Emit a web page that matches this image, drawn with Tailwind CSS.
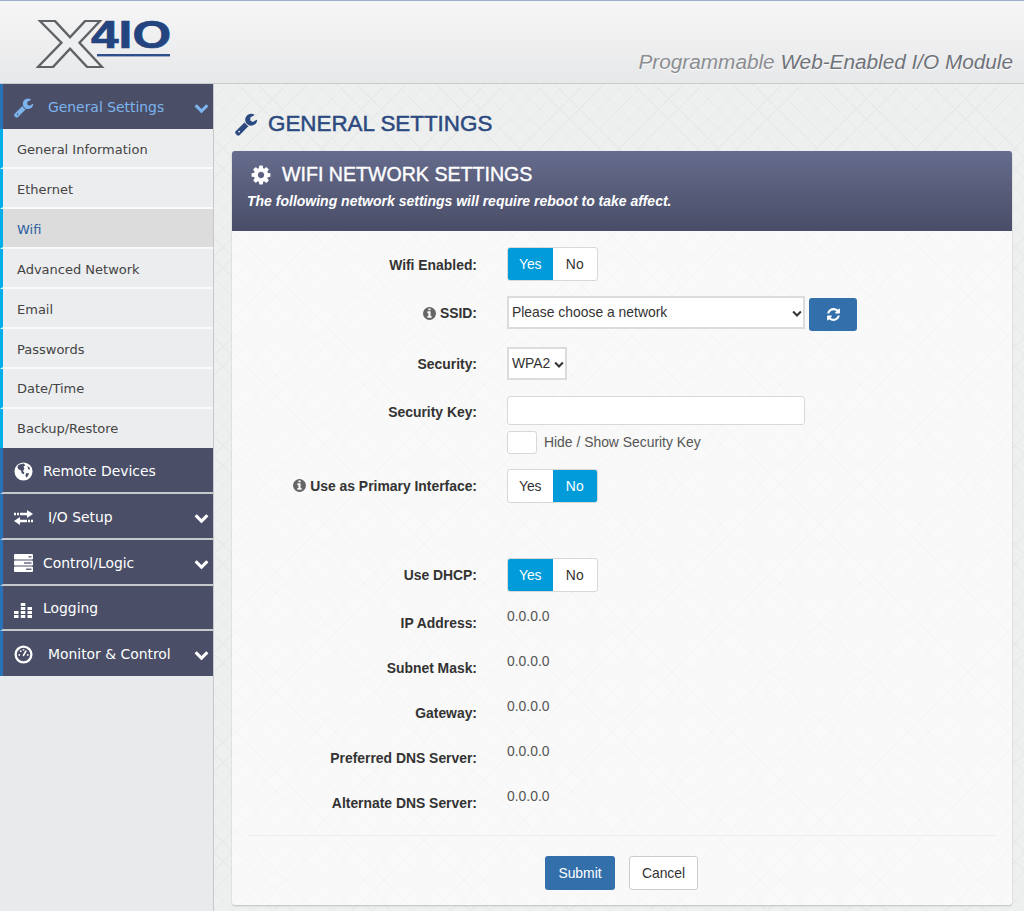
<!DOCTYPE html>
<html lang="en">
<head>
<meta charset="utf-8">
<title>X410 - General Settings</title>
<script src="https://cdn.jsdelivr.net/npm/@tailwindcss/browser@4"></script>
</head>
<body class="h-[911px] w-[1024px] overflow-hidden bg-[#eef0ef] font-['Liberation_Sans',sans-serif] text-[#333]">

<!-- shared icons (font-awesome style, 1792 grid) -->
<svg class="hidden">
  <symbol id="i-wrench" viewBox="0 0 1792 1792"><path fill="currentColor" d="M448 1472q0-26-19-45t-45-19-45 19-19 45 19 45 45 19 45-19 19-45zm644-420l-682 682q-37 37-90 37-52 0-91-37l-106-108q-38-36-38-90 0-53 38-91l681-681q39 98 114.5 173.5t173.5 114.5zm634-435q0 39-23 106-47 134-164.5 217.5t-258.5 83.5q-185 0-316.5-131.5t-131.5-316.5 131.5-316.5 316.5-131.5q58 0 121.5 16.5t107.5 46.5q16 11 16 28t-16 28l-293 169v224l193 107q5-3 79-48.5t135.5-81 70.5-35.5q15 0 23.5 10t8.5 25z"/></symbol>
  <symbol id="i-cog" viewBox="0 0 1792 1792"><path fill="currentColor" d="M1152 896q0-106-75-181t-181-75-181 75-75 181 75 181 181 75 181-75 75-181zm512-109v222q0 12-8 23t-20 13l-185 28q-19 54-39 91 35 50 107 138 10 12 10 25t-9 23q-27 37-99 108t-94 71q-12 0-26-9l-138-108q-44 23-91 38-16 136-29 186-7 28-36 28h-222q-14 0-24.5-8.5t-11.5-21.5l-28-184q-49-16-90-37l-141 107q-10 9-25 9-14 0-25-11-126-114-165-168-7-10-7-23 0-12 8-23 15-21 51-66.5t54-70.5q-27-50-41-99l-183-27q-13-2-21-12.5t-8-23.5v-222q0-12 8-23t19-13l186-28q14-46 39-92-40-57-107-138-10-12-10-24 0-10 9-23 26-36 98.5-107.5t94.5-71.5q13 0 26 10l138 107q44-23 91-38 16-136 29-186 7-28 36-28h222q14 0 24.5 8.5t11.5 21.5l28 184q49 16 90 37l142-107q9-9 24-9 13 0 25 10 129 119 165 170 7 8 7 22 0 12-8 23-15 21-51 66.5t-54 70.5q26 50 41 98l183 28q13 2 21 12.5t8 23.5z"/></symbol>
  <symbol id="i-chevron" viewBox="0 0 1792 1792"><path fill="currentColor" d="M1683 808l-742 741q-19 19-45 19t-45-19l-742-741q-19-19-19-45.5t19-45.5l166-165q19-19 45-19t45 19l531 531 531-531q19-19 45-19t45 19l166 165q19 19 19 45.5t-19 45.5z"/></symbol>
  <symbol id="i-info" viewBox="0 0 1792 1792"><path fill="currentColor" d="M1152 1376v-160q0-14-9-23t-23-9h-96v-512q0-14-9-23t-23-9h-320q-14 0-23 9t-9 23v160q0 14 9 23t23 9h96v320h-96q-14 0-23 9t-9 23v160q0 14 9 23t23 9h448q14 0 23-9t9-23zm-128-896v-160q0-14-9-23t-23-9h-192q-14 0-23 9t-9 23v160q0 14 9 23t23 9h192q14 0 23-9t9-23zm640 416q0 209-103 385.5t-279.5 279.5-385.5 103-385.5-103-279.5-279.5-103-385.5 103-385.5 279.5-279.5 385.5-103 385.5 103 279.5 279.5 103 385.5z"/></symbol>
  <symbol id="i-refresh" viewBox="0 0 1792 1792"><path fill="currentColor" d="M1639 1056q0 5-1 7-64 268-268 434.5t-478 166.5q-146 0-282.5-55t-243.5-157l-129 129q-19 19-45 19t-45-19-19-45v-448q0-26 19-45t45-19h448q26 0 45 19t19 45-19 45l-137 137q71 66 161 102t187 36q134 0 250-65t186-179q11-17 53-117 8-23 30-23h192q13 0 22.5 9.5t9.5 22.5zm25-800v448q0 26-19 45t-45 19h-448q-26 0-45-19t-19-45 19-45l138-138q-148-137-349-137-134 0-250 65t-186 179q-11 17-53 117-8 23-30 23h-199q-13 0-22.5-9.5t-9.5-22.5v-7q65-268 270-434.5t480-166.5q146 0 284 55.5t245 156.5l130-129q19-19 45-19t45 19 19 45z"/></symbol>
</svg>

<header class="h-[84px] border-t border-b border-t-[#9fb0cc] border-b-[#c9cbcb] bg-gradient-to-b from-[#f6f6f7] to-[#e7e8e9] flex justify-between">
  <svg class="ml-[36px] mt-[4px] w-[140px] h-[78px]" viewBox="0 0 140 78">
    <text x="1" y="62" font-family="Liberation Sans" font-weight="700" font-size="66" textLength="66" lengthAdjust="spacingAndGlyphs" fill="#eeeff0" stroke="#606266" stroke-width="1.8">X</text>
    <text x="55" y="43" font-family="Liberation Sans" font-weight="700" font-size="38" textLength="80" lengthAdjust="spacingAndGlyphs" fill="#24447f" stroke="#24447f" stroke-width="0.7">4IO</text>
    <rect x="61" y="49" width="73" height="2.4" fill="#2d4f8c"/>
  </svg>
  <p class="self-end mr-[11px] mb-[7px] text-[20.75px] leading-[28px] italic text-[#8b8d91] [text-shadow:0_1px_1px_#fff]">Programmable <span class="text-[#6f7278]">Web-Enabled I/O Module</span></p>
</header>

<div class="flex h-[827px]">
  <!-- sidebar -->
  <nav class="w-[214px] shrink-0 bg-[#e9eaec] border-r border-[#c6c8c9] font-['DejaVu_Sans',sans-serif]">
    <a class="flex items-center h-[45px] pt-[1px] border-l-[3px] border-[#2a72b8] bg-[#4a4f67] text-[#7db4ee] text-[13.9px]">
      <svg class="w-[21px] h-[21px] ml-[10px]"><use href="#i-wrench"/></svg>
      <span class="ml-[14px]">General Settings</span>
      <svg class="w-[15px] h-[15px] ml-auto mr-[4px]"><use href="#i-chevron"/></svg>
    </a>
    <ul class="text-[13px] text-[#444]">
      <li class="flex items-center h-[40px] pt-[4px] border-l-[3px] border-[#00aeea] bg-[#ecedef] border-b-2 border-b-white/80 pl-[14px]">General Information</li>
      <li class="flex items-center h-[40px] pt-[4px] border-l-[3px] border-[#00aeea] bg-[#ecedef] border-b-2 border-b-white/80 pl-[14px]">Ethernet</li>
      <li class="flex items-center h-[40px] pt-[4px] border-l-[3px] border-[#00aeea] bg-[#dcdcdc] border-b-2 border-b-white/80 pl-[14px] text-[#2a5fa0]">Wifi</li>
      <li class="flex items-center h-[40px] pt-[4px] border-l-[3px] border-[#00aeea] bg-[#ecedef] border-b-2 border-b-white/80 pl-[14px]">Advanced Network</li>
      <li class="flex items-center h-[40px] pt-[4px] border-l-[3px] border-[#00aeea] bg-[#ecedef] border-b-2 border-b-white/80 pl-[14px]">Email</li>
      <li class="flex items-center h-[40px] pt-[4px] border-l-[3px] border-[#00aeea] bg-[#ecedef] border-b-2 border-b-white/80 pl-[14px]">Passwords</li>
      <li class="flex items-center h-[40px] pt-[2px] border-l-[3px] border-[#00aeea] bg-[#ecedef] border-b-2 border-b-white/80 pl-[14px]">Date/Time</li>
      <li class="flex items-center h-[39px] border-l-[3px] border-[#00aeea] bg-[#ecedef] pl-[14px]">Backup/Restore</li>
    </ul>
    <a class="flex items-center h-[46px] pt-[2px] border-l-[3px] border-[#2a72b8] bg-[#4a4f67] border-b-2 border-b-[#c6c8ce] text-white text-[13.9px]">
      <svg class="w-[19px] h-[19px] ml-[11px]" viewBox="0 0 20 20"><circle cx="10" cy="10" r="9.5" fill="#fff"/><path fill="#4a4f67" d="M6 2.500l4-1 2 2-2 1.500 1 2-1.500 2.500 1.500 2-1 1.500-2-1.500-.5-2.500-2.500-1-1.500-2.500 1-2zM13 11.500l3 .5-1.500 3-1.500 1.500-1-2.500zM14 4l2.500 2 .5 2-2-.5z"/></svg>
      <span class="ml-[10px]">Remote Devices</span>
    </a>
    <a class="flex items-center h-[46px] pt-[2px] border-l-[3px] border-[#2a72b8] bg-[#4a4f67] border-b-2 border-b-[#c6c8ce] text-white text-[13.9px]">
      <svg class="w-[19px] h-[15px] ml-[11px]" viewBox="0 0 19 15"><path fill="#fff" d="M0 2.800h2v2.400H0zM3 2.800h2v2.400H3zM6 2.800h7V0l6 4-6 4V5.200H6zM0 11l6-4v2.800h7v2.400H6V15zM14 9.800h2v2.400h-2zM17 9.800h2v2.400h-2z"/></svg>
      <span class="ml-[15px]">I/O Setup</span>
      <svg class="w-[15px] h-[15px] ml-auto mr-[4px] text-white"><use href="#i-chevron"/></svg>
    </a>
    <a class="flex items-center h-[46px] pt-[2px] border-l-[3px] border-[#2a72b8] bg-[#4a4f67] border-b-2 border-b-[#c6c8ce] text-white text-[13.9px]">
      <svg class="w-[19px] h-[18px] ml-[11px]" viewBox="0 0 19 18"><path fill="#fff" d="M1 0h17a1 1 0 0 1 1 1v3.500a1 1 0 0 1-1 1H1a1 1 0 0 1-1-1V1a1 1 0 0 1 1-1zM1 6.500h17a1 1 0 0 1 1 1v3a1 1 0 0 1-1 1H1a1 1 0 0 1-1-1v-3a1 1 0 0 1 1-1zM1 12.500h17a1 1 0 0 1 1 1V17a1 1 0 0 1-1 1H1a1 1 0 0 1-1-1v-3.500a1 1 0 0 1 1-1z"/><path fill="#6a6e84" d="M14.500 2h3v1.500h-3zM10 8.300h7.500v1.500H10zM12 14.500h5.500V16H12z"/></svg>
      <span class="ml-[10px]">Control/Logic</span>
      <svg class="w-[15px] h-[15px] ml-auto mr-[4px] text-white"><use href="#i-chevron"/></svg>
    </a>
    <a class="flex items-center h-[45px] pt-[2px] border-l-[3px] border-[#2a72b8] bg-[#4a4f67] border-b-2 border-b-[#c6c8ce] text-white text-[13.9px]">
      <svg class="w-[18px] h-[18px] ml-[11px]" viewBox="0 0 18 18"><path fill="#fff" d="M0 15h4.500v3H0zM0 11h4.500v3H0zM6.800 15h4.500v3H6.800zM6.800 11h4.500v3H6.800zM6.800 7h4.500v3H6.800zM6.800 3h4.500v3H6.800zM13.500 15H18v3h-4.500zM13.500 11H18v3h-4.500zM13.500 7H18v3h-4.500z"/></svg>
      <span class="ml-[11px]">Logging</span>
    </a>
    <a class="flex items-center h-[45px] pt-[2px] border-l-[3px] border-[#2a72b8] bg-[#4a4f67] text-white text-[13.9px]">
      <svg class="w-[19px] h-[19px] ml-[11px]" viewBox="0 0 20 20"><circle cx="10" cy="10" r="8.300" fill="none" stroke="#fff" stroke-width="2.400"/><path fill="none" stroke="#fff" stroke-width="1.800" stroke-linecap="round" d="M10 11l2.500-4.500M5.500 10.500h.1M7 6.500h.1M10 5h.1M14.500 10.500h.1"/></svg>
      <span class="ml-[15px]">Monitor &amp; Control</span>
      <svg class="w-[15px] h-[15px] ml-auto mr-[4px] text-white"><use href="#i-chevron"/></svg>
    </a>
  </nav>

  <!-- main -->
  <main class="flex-1 pl-[18px] pr-[12px] bg-[#eef0ef] bg-[repeating-linear-gradient(45deg,transparent_0,transparent_13px,#e8eae9_13px,#e8eae9_14px),repeating-linear-gradient(-45deg,transparent_0,transparent_13px,#e8eae9_13px,#e8eae9_14px)]">
    <h1 class="flex items-center h-[67px] pl-[2px] pt-[13px] text-[22.4px] font-normal text-[#2c4a80] [-webkit-text-stroke:0.5px_#2c4a80]">
      <svg class="w-[24px] h-[24px]"><use href="#i-wrench"/></svg>
      <span class="ml-[10px]">GENERAL SETTINGS</span>
    </h1>
    <section class="h-[754px] rounded-[3px] bg-[#f8f9f8] bg-[repeating-linear-gradient(45deg,transparent_0,transparent_13px,#f5f6f5_13px,#f5f6f5_14px),repeating-linear-gradient(-45deg,transparent_0,transparent_13px,#f5f6f5_13px,#f5f6f5_14px)] shadow-[0_1px_2px_rgba(0,0,0,0.2)]">
      <div class="h-[80px] rounded-t-[3px] bg-gradient-to-b from-[#666c8d] to-[#494d67] pl-[15px] pt-[9px] text-white">
        <h2 class="flex items-center h-[28px] pl-[3px] pt-[2px] text-[19.6px] font-normal [-webkit-text-stroke:0.4px_#fff]">
          <svg class="w-[22px] h-[22px]"><use href="#i-cog"/></svg>
          <span class="ml-[10px]">WIFI NETWORK SETTINGS</span>
        </h2>
        <p class="mt-[3px] text-[14px] font-bold italic">The following network settings will require reboot to take affect.</p>
      </div>

      <form class="pt-[16px] text-[13.9px]">
        <div class="flex items-center h-[34px]">
          <label class="w-[245px] mr-[30px] pt-[2px] text-right font-bold">Wifi Enabled:</label>
          <div class="flex h-full w-[91px] rounded-[3px] border border-[#d8d8d8] bg-white overflow-hidden">
            <span class="flex flex-1 items-center justify-center bg-[#009bd8] text-white">Yes</span>
            <span class="flex flex-1 items-center justify-center">No</span>
          </div>
        </div>

        <div class="flex items-start h-[36px] mt-[15px]">
          <label class="flex items-center justify-end h-[33px] w-[245px] mr-[30px] pt-[2px] font-bold">
            <svg class="w-[15px] h-[15px] mr-[3px] text-[#666]"><use href="#i-info"/></svg>SSID:
          </label>
          <div class="relative h-[33px] w-[298px]">
            <select class="h-full w-full appearance-none border-2 border-[#dcdcdc] bg-white pl-[3px]"><option>Please choose a network</option></select>
            <svg class="absolute right-[3px] top-[12px] w-[10px] h-[10px] text-[#333]"><use href="#i-chevron"/></svg>
          </div>
          <button type="button" class="flex items-center justify-center h-[33px] w-[48px] mt-[2px] ml-[4px] rounded-[3px] bg-[#336faa] text-white">
            <svg class="w-[15px] h-[15px]"><use href="#i-refresh"/></svg>
          </button>
        </div>

        <div class="flex items-center h-[33px] mt-[15px]">
          <label class="w-[245px] mr-[30px] pt-[2px] text-right font-bold">Security:</label>
          <div class="relative h-full w-[60px]">
            <select class="h-full w-full appearance-none border-2 border-[#dcdcdc] bg-white pl-[3px]"><option>WPA2</option></select>
            <svg class="absolute right-[3px] top-[12px] w-[10px] h-[10px] text-[#333]"><use href="#i-chevron"/></svg>
          </div>
        </div>

        <div class="flex items-center h-[29px] mt-[16px]">
          <label class="w-[245px] mr-[30px] pt-[3px] text-right font-bold">Security Key:</label>
          <input type="text" class="h-full w-[298px] rounded-[3px] border border-[#d8d8d8] bg-white">
        </div>

        <div class="flex items-center h-[23px] mt-[6px] pl-[275px]">
          <span class="h-full w-[30px] rounded-[3px] border border-[#d8d8d8] bg-white"></span>
          <span class="ml-[7px] text-[#555]">Hide / Show Security Key</span>
        </div>

        <div class="flex items-center h-[34px] mt-[15px]">
          <label class="flex items-center justify-end w-[245px] mr-[30px] font-bold">
            <svg class="w-[15px] h-[15px] mr-[3px] text-[#666]"><use href="#i-info"/></svg>Use as Primary Interface:
          </label>
          <div class="flex h-full w-[91px] rounded-[3px] border border-[#d8d8d8] bg-white overflow-hidden">
            <span class="flex flex-1 items-center justify-center">Yes</span>
            <span class="flex flex-1 items-center justify-center bg-[#009bd8] text-white">No</span>
          </div>
        </div>

        <div class="flex items-center h-[34px] mt-[55px]">
          <label class="w-[245px] mr-[30px] text-right font-bold">Use DHCP:</label>
          <div class="flex h-full w-[91px] rounded-[3px] border border-[#d8d8d8] bg-white overflow-hidden">
            <span class="flex flex-1 items-center justify-center bg-[#009bd8] text-white">Yes</span>
            <span class="flex flex-1 items-center justify-center">No</span>
          </div>
        </div>

        <div class="mt-[9px]">
          <div class="flex items-start h-[45px]">
            <label class="w-[245px] mr-[30px] pt-[12px] leading-[20px] text-right font-bold">IP Address:</label>
            <span class="pt-[5px] leading-[20px] text-[#555]">0.0.0.0</span>
          </div>
          <div class="flex items-start h-[45px]">
            <label class="w-[245px] mr-[30px] pt-[12px] leading-[20px] text-right font-bold">Subnet Mask:</label>
            <span class="pt-[5px] leading-[20px] text-[#555]">0.0.0.0</span>
          </div>
          <div class="flex items-start h-[45px]">
            <label class="w-[245px] mr-[30px] pt-[12px] leading-[20px] text-right font-bold">Gateway:</label>
            <span class="pt-[5px] leading-[20px] text-[#555]">0.0.0.0</span>
          </div>
          <div class="flex items-start h-[45px]">
            <label class="w-[245px] mr-[30px] pt-[12px] leading-[20px] text-right font-bold">Preferred DNS Server:</label>
            <span class="pt-[5px] leading-[20px] text-[#555]">0.0.0.0</span>
          </div>
          <div class="flex items-start h-[45px]">
            <label class="w-[245px] mr-[30px] pt-[12px] leading-[20px] text-right font-bold">Alternate DNS Server:</label>
            <span class="pt-[5px] leading-[20px] text-[#555]">0.0.0.0</span>
          </div>
        </div>

        <hr class="mx-[16px] mt-[9px] border-[#eceded]">
        <div class="flex gap-[14px] mt-[20px] pl-[313px]">
          <button type="button" class="h-[34px] w-[70px] rounded-[3px] bg-[#336faa] text-white">Submit</button>
          <button type="button" class="h-[34px] w-[69px] rounded-[3px] border border-[#cccccc] bg-white">Cancel</button>
        </div>
      </form>
    </section>
  </main>
</div>
</body>
</html>
